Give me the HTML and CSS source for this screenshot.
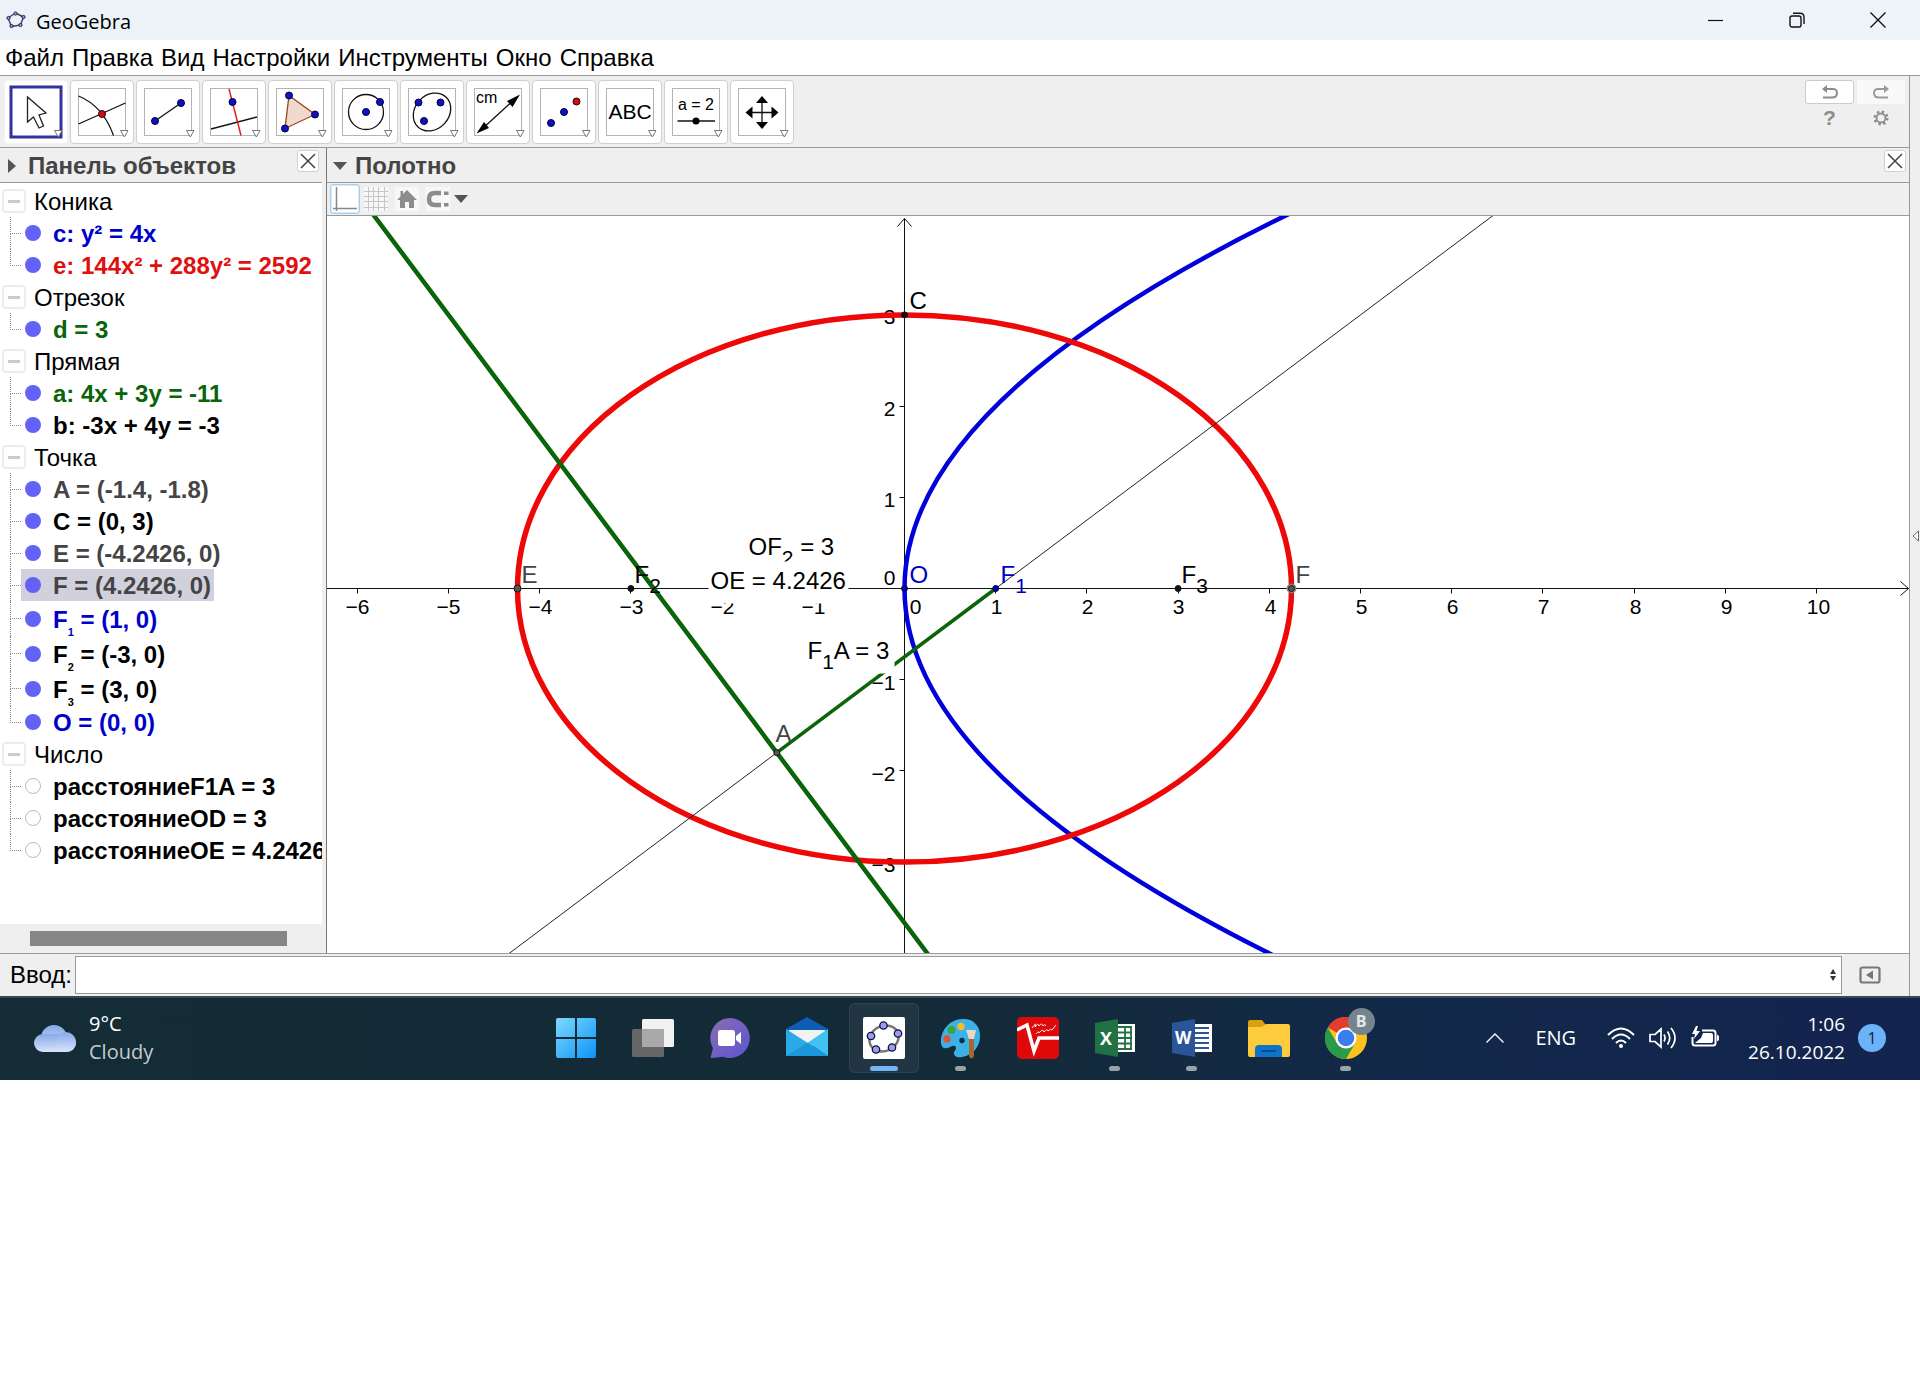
FILE: index.html
```html
<!DOCTYPE html>
<html lang="ru">
<head>
<meta charset="utf-8">
<title>GeoGebra</title>
<meta name="viewport" content="width=device-width, initial-scale=1">
<link rel="stylesheet" href="styles.css">
</head>
<body>
<div class="window">
  <header class="titlebar">
    <svg class="app-logo" viewBox="0 0 20 18" width="20" height="18" aria-hidden="true">
      <path d="M9.500 2 17.500 6 14.500 14 5.500 15.500 2 7Z" fill="none" stroke="#444" stroke-width="1.400" stroke-linejoin="round"/>
      <g fill="#9a9aee" stroke="#225"><circle cx="9.500" cy="2.500" r="1.600"/><circle cx="17.500" cy="6" r="1.600"/><circle cx="14.500" cy="14" r="1.600"/><circle cx="5.500" cy="15" r="1.600"/><circle cx="2.500" cy="7" r="1.600"/></g>
    </svg>
    <span class="app-name">GeoGebra</span>
    <div class="window-controls">
      <button type="button" aria-label="Свернуть"><svg viewBox="0 0 16 16" width="16" height="16"><path d="M0 8.500H15" stroke="#111" stroke-width="1.200"/></svg></button>
      <button type="button" aria-label="Развернуть"><svg viewBox="0 0 16 16" width="16" height="16" fill="none" stroke="#111" stroke-width="1.400"><rect x="1" y="4" width="11" height="11" rx="2"/><path d="M4 1.200H11Q15 1.200 15 5V12"/></svg></button>
      <button type="button" aria-label="Закрыть"><svg viewBox="0 0 16 16" width="16" height="16"><path d="M.5.5 15.500 15.500M15.500.5.5 15.500" stroke="#111" stroke-width="1.400"/></svg></button>
    </div>
  </header>

  <nav class="menubar">
    <button type="button">Файл</button><button type="button">Правка</button><button type="button">Вид</button><button type="button">Настройки</button><button type="button">Инструменты</button><button type="button">Окно</button><button type="button">Справка</button>
  </nav>

  <div class="body-row">
    <div class="content">
      <div class="toolbar">
        <div class="tools">
          <button class="tool selected" type="button" aria-label="Перемещать"><svg viewBox="0 0 62 62"><rect x="6" y="6" width="50" height="50" fill="#fff" stroke="#33339a" stroke-width="3"/><path d="M22.500 16V41L28.500 36 34 47 38.500 45 34 34 41 32Z" fill="#fff" stroke="#222" stroke-width="1.300"/><path class="more" d="M49.500 49.500H57L53.300 56Z"/></svg></button>
          <button class="tool" type="button" aria-label="Точка"><svg viewBox="0 0 62 62"><rect class="frame" x="7.500" y="7.500" width="47" height="47"/><path class="ink" d="M7.500 15Q32 25 42.500 54.500M7.500 43 54.500 22"/><circle cx="31" cy="33" r="3.500" fill="#d01010" stroke="#300"/><path class="more" d="M49.500 49.500H57L53.300 56Z"/></svg></button>
          <button class="tool" type="button" aria-label="Отрезок"><svg viewBox="0 0 62 62"><rect class="frame" x="7.500" y="7.500" width="47" height="47"/><path class="ink" d="M18 40 44 22"/><circle class="pt" cx="18" cy="40" r="3.500"/><circle class="pt" cx="44" cy="22" r="3.500"/><path class="more" d="M49.500 49.500H57L53.300 56Z"/></svg></button>
          <button class="tool" type="button" aria-label="Перпендикулярная прямая"><svg viewBox="0 0 62 62"><rect class="frame" x="7.500" y="7.500" width="47" height="47"/><path class="ink" d="M8 48 54 36"/><path d="M26 8 38 54.500" stroke="#d22" stroke-width="1.500"/><circle class="pt" cx="29.500" cy="21" r="3.500"/><path class="more" d="M49.500 49.500H57L53.300 56Z"/></svg></button>
          <button class="tool" type="button" aria-label="Многоугольник"><svg viewBox="0 0 62 62"><rect class="frame" x="7.500" y="7.500" width="47" height="47"/><path d="M20 14.500 46 33.500 16 47.500Z" fill="#f1d9cd" stroke="#964b1e" stroke-width="1.300"/><circle class="pt" cx="20" cy="14.500" r="3.500"/><circle class="pt" cx="46" cy="33.500" r="3.500"/><circle class="pt" cx="16" cy="47.500" r="3.500"/><path class="more" d="M49.500 49.500H57L53.300 56Z"/></svg></button>
          <button class="tool" type="button" aria-label="Окружность"><svg viewBox="0 0 62 62"><rect class="frame" x="7.500" y="7.500" width="47" height="47"/><circle class="ink" cx="31" cy="31" r="17.500"/><circle class="pt" cx="31" cy="31" r="3.500"/><circle class="pt" cx="45" cy="21" r="3.500"/><path class="more" d="M49.500 49.500H57L53.300 56Z"/></svg></button>
          <button class="tool" type="button" aria-label="Эллипс"><svg viewBox="0 0 62 62"><rect class="frame" x="7.500" y="7.500" width="47" height="47"/><ellipse class="ink" cx="31" cy="31" rx="20.500" ry="17" transform="rotate(-47 31 31)"/><circle class="pt" cx="17.500" cy="21.500" r="3.500"/><circle class="pt" cx="39.500" cy="21.500" r="3.500"/><circle class="pt" cx="23" cy="40" r="3.500"/><path class="more" d="M49.500 49.500H57L53.300 56Z"/></svg></button>
          <button class="tool" type="button" aria-label="Расстояние"><svg viewBox="0 0 62 62"><rect class="frame" x="7.500" y="7.500" width="47" height="47"/><text x="9" y="22" font-size="16">cm</text><path class="ink" d="M14 49 49 17"/><path d="M9.500 52.500 17 41 22 47ZM53 13.500 40 20 45.500 26Z"/><path class="more" d="M49.500 49.500H57L53.300 56Z"/></svg></button>
          <button class="tool" type="button" aria-label="Симметрия"><svg viewBox="0 0 62 62"><rect class="frame" x="7.500" y="7.500" width="47" height="47"/><circle class="pt" cx="18" cy="42" r="3.500"/><circle class="pt" cx="31" cy="31" r="3.500"/><circle cx="43.500" cy="20.500" r="3.500" fill="#d01010" stroke="#300"/><path class="more" d="M49.500 49.500H57L53.300 56Z"/></svg></button>
          <button class="tool" type="button" aria-label="Текст"><svg viewBox="0 0 62 62"><rect class="frame" x="7.500" y="7.500" width="47" height="47"/><text x="31" y="38" font-size="21" text-anchor="middle">ABC</text><path class="more" d="M49.500 49.500H57L53.300 56Z"/></svg></button>
          <button class="tool" type="button" aria-label="Ползунок"><svg viewBox="0 0 62 62"><rect class="frame" x="7.500" y="7.500" width="47" height="47"/><text x="31" y="29" font-size="16" text-anchor="middle">a = 2</text><path class="ink" d="M12.500 40H50"/><circle cx="31" cy="40" r="3.500"/><path class="more" d="M49.500 49.500H57L53.300 56Z"/></svg></button>
          <button class="tool" type="button" aria-label="Переместить чертёж"><svg viewBox="0 0 62 62"><rect class="frame" x="7.500" y="7.500" width="47" height="47"/><path class="ink" d="M31 20V43M20 31.500H43"/><path d="M31 15 37 22H25ZM31 48 37 41H25ZM14.500 31.500 21.500 25.500V37.500ZM47.500 31.500 40.500 25.500V37.500Z"/><path class="more" d="M49.500 49.500H57L53.300 56Z"/></svg></button>
        </div>
        <div class="side-tools">
          <button class="undo" type="button" aria-label="Отменить"><svg viewBox="0 0 18 16" width="18" height="16"><path d="M2 13.500H11Q16 13.500 16 9T11 5H4" fill="none" stroke="#8c8c8c" stroke-width="2"/><path d="M1 5 6 1V9Z" fill="#8c8c8c"/></svg></button>
          <button class="redo" type="button" aria-label="Повторить"><svg viewBox="0 0 18 16" width="18" height="16"><path d="M16 13.500H7Q2 13.500 2 9T7 5H14" fill="none" stroke="#999" stroke-width="2"/><path d="M17 5 12 1V9Z" fill="#999"/></svg></button>
          <button class="plain" type="button" aria-label="Справка">?</button>
          <button class="plain" type="button" aria-label="Настройки"><svg viewBox="0 0 16 16" width="16" height="16" fill="none" stroke="#8c8c8c"><circle cx="8" cy="8" r="4.500" stroke-width="1.800"/><circle cx="8" cy="8" r="6.300" stroke-width="2.400" stroke-dasharray="2.400 2.550"/></svg></button>
        </div>
      </div>

      <div class="views">
        <section class="algebra">
          <header class="view-head">
            <svg viewBox="0 0 8 14" width="8" height="14"><path d="M0 0 8 7 0 14Z" fill="#555"/></svg>
            <h2>Панель объектов</h2>
            <button class="close" type="button" aria-label="Закрыть панель"><svg viewBox="0 0 16 16" width="16" height="16"><path d="M1 1 15 15M15 1 1 15" stroke="#444" stroke-width="1.500"/></svg></button>
          </header>
          <div class="tree">
            <div class="group"><button class="fold" type="button" aria-label="Свернуть"></button>Коника</div>
            <ul>
              <li><span class="branch"></span><span class="item blue"><i class="dot"></i>c: y² = 4x</span></li>
              <li><span class="branch"></span><span class="item red"><i class="dot"></i>e: 144x² + 288y² = 2592</span></li>
            </ul>
            <div class="group"><button class="fold" type="button" aria-label="Свернуть"></button>Отрезок</div>
            <ul>
              <li><span class="branch"></span><span class="item green"><i class="dot"></i>d = 3</span></li>
            </ul>
            <div class="group"><button class="fold" type="button" aria-label="Свернуть"></button>Прямая</div>
            <ul>
              <li><span class="branch"></span><span class="item green"><i class="dot"></i>a: 4x + 3y = -11</span></li>
              <li><span class="branch"></span><span class="item"><i class="dot"></i>b: -3x + 4y = -3</span></li>
            </ul>
            <div class="group"><button class="fold" type="button" aria-label="Свернуть"></button>Точка</div>
            <ul>
              <li><span class="branch"></span><span class="item gray"><i class="dot"></i>A = (-1.4, -1.8)</span></li>
              <li><span class="branch"></span><span class="item"><i class="dot"></i>C = (0, 3)</span></li>
              <li><span class="branch"></span><span class="item gray"><i class="dot"></i>E = (-4.2426, 0)</span></li>
              <li><span class="branch"></span><span class="item gray current"><i class="dot"></i>F = (4.2426, 0)</span></li>
              <li class="tall"><span class="branch"></span><span class="item blue"><i class="dot"></i><span>F<sub>1</sub> = (1, 0)</span></span></li>
              <li class="tall"><span class="branch"></span><span class="item"><i class="dot"></i><span>F<sub>2</sub> = (-3, 0)</span></span></li>
              <li class="tall"><span class="branch"></span><span class="item"><i class="dot"></i><span>F<sub>3</sub> = (3, 0)</span></span></li>
              <li><span class="branch"></span><span class="item blue"><i class="dot"></i>O = (0, 0)</span></li>
            </ul>
            <div class="group"><button class="fold" type="button" aria-label="Свернуть"></button>Число</div>
            <ul>
              <li><span class="branch"></span><span class="item"><i class="dot off"></i>расстояниеF1A = 3</span></li>
              <li><span class="branch"></span><span class="item"><i class="dot off"></i>расстояниеOD = 3</span></li>
              <li><span class="branch"></span><span class="item"><i class="dot off"></i>расстояниеOE = 4.2426</span></li>
            </ul>
          </div>
          <div class="scroll-track"><div class="scroll-thumb"></div></div>
        </section>

        <section class="graphics">
          <header class="view-head">
            <svg viewBox="0 0 14 8" width="14" height="8"><path d="M0 0H14L7 8Z" fill="#555"/></svg>
            <h2>Полотно</h2>
            <button class="close" type="button" aria-label="Закрыть полотно"><svg viewBox="0 0 16 16" width="16" height="16"><path d="M1 1 15 15M15 1 1 15" stroke="#444" stroke-width="1.500"/></svg></button>
          </header>
          <div class="stylebar">
            <button class="on" type="button" aria-label="Оси"><svg viewBox="0 0 24 24" width="24" height="24"><path d="M3.500 0V24M0 21.500H24" stroke="#888" stroke-width="1.500"/></svg></button>
            <button type="button" aria-label="Сетка"><svg viewBox="0 0 24 24" width="24" height="24"><path d="M4.500 0V24M9.500 0V24M14.500 0V24M20.500 0V24M0 4.500H24M0 9.500H24M0 14.500H24M0 20.500H24" stroke="#c6c6c6"/></svg></button>
            <button type="button" aria-label="Вид по умолчанию"><svg viewBox="0 0 24 24" width="24" height="24"><path d="M12 3 22 13H19V21H14V15H10V21H5V13H2L5.500 9.500V4H8V7Z" fill="#8c8c8c"/></svg></button>
            <button type="button" aria-label="Привязка"><svg viewBox="0 0 24 24" width="24" height="24"><path d="M15 6H9Q3 6 3 12T9 18H15" fill="none" stroke="#8c8c8c" stroke-width="4.500"/><path d="M18 4.500H22.500V8H18ZM18 16H22.500V19.500H18Z" fill="#8c8c8c"/></svg></button>
            <button class="drop" type="button" aria-label="Ещё"><svg viewBox="0 0 14 8" width="14" height="8"><path d="M0 0H14L7 8Z" fill="#555"/></svg></button>
          </div>
          <svg class="plot" viewBox="0 0 1582 737" role="img" aria-label="Чертёж">
            <g transform="translate(577.5 372.5)">
              <g class="axis">
                <path d="M-578 0H1004M0 -370V365M996 -7 1004 0 996 7M-7 -362 0 -370 7 -362"/>
                <path d="M-547 0v5M-456 0v5M-365 0v5M-274 0v5M-182 0v5M-91 0v5M91 0v5M182 0v5M274 0v5M365 0v5M456 0v5M547 0v5M638 0v5M730 0v5M821 0v5M912 0v5M0 -274h-5M0 -182h-5M0 -91h-5M0 91h-5M0 182h-5M0 274h-5"/>
              </g>
              <g class="num mid">
                <text x="-547" y="25">−6</text><text x="-456" y="25">−5</text><text x="-364" y="25">−4</text><text x="-273" y="25">−3</text><text x="-182" y="25">−2</text><text x="-91" y="25">−1</text>
                <text x="11" y="25">0</text><text x="92" y="25">1</text><text x="183" y="25">2</text><text x="274" y="25">3</text><text x="366" y="25">4</text><text x="457" y="25">5</text><text x="548" y="25">6</text><text x="639" y="25">7</text><text x="731" y="25">8</text><text x="822" y="25">9</text><text x="914" y="25">10</text>
              </g>
              <g class="num end">
                <text x="-9" y="-265">3</text><text x="-9" y="-173">2</text><text x="-9" y="-82">1</text><text x="-9" y="-4">0</text><text x="-9" y="101">−1</text><text x="-9" y="192">−2</text><text x="-9" y="283">−3</text>
              </g>
              <path d="M441.400 -401.300Q-441.400 0 441.400 401.300" fill="none" stroke="#0000dc" stroke-width="4.500"/>
              <ellipse rx="387" ry="273.600" fill="none" stroke="#ee0808" stroke-width="5.500"/>
              <path d="M-456 410.400 638.400 -410.400" stroke="#222" stroke-width="1"/>
              <path d="M-547.200 -395.200 45.600 395.200" stroke="#0a640a" stroke-width="4.500"/>
              <path d="M-127.700 164.200 91.200 0" stroke="#0a640a" stroke-width="3.500"/>
              <rect x="-100" y="42" width="90" height="43" fill="#fff"/>
              <text class="lbl" x="-97" y="70">F<tspan class="sub" dy="10">1</tspan><tspan dy="-10">A = 3</tspan></text>
              <text class="lbl" x="-156" y="-34">OF<tspan class="sub" dy="10">2</tspan><tspan dy="-10"> = 3</tspan></text>
              <rect x="-196" y="-27" width="140" height="42" fill="#fff"/>
              <text class="lbl" x="-194" y="0">OE = 4.2426</text>
              <g stroke="#111">
                <circle cx="-387" cy="0" r="3.500" fill="#555"/>
                <circle cx="-273.600" cy="0" r="3" fill="#111"/>
                <circle cx="0" cy="0" r="3" fill="#00c"/>
                <circle cx="91.200" cy="0" r="3" fill="#00c"/>
                <circle cx="0" cy="-273.600" r="3" fill="#111"/>
                <circle cx="273.600" cy="0" r="3" fill="#111"/>
                <circle cx="387" cy="0" r="4.500" fill="#999" stroke="#777"/>
                <circle cx="387" cy="0" r="3" fill="#555"/>
                <circle cx="-127.700" cy="164.200" r="3" fill="#555"/>
              </g>
              <text class="lbl" x="5" y="-280">C</text>
              <text class="lbl g" x="-383" y="-6">E</text>
              <text class="lbl" x="-270" y="-6">F<tspan class="sub" dy="10">2</tspan></text>
              <text class="lbl b" x="5" y="-6">O</text>
              <text class="lbl b" x="96" y="-6">F<tspan class="sub" dy="10">1</tspan></text>
              <text class="lbl" x="277" y="-6">F<tspan class="sub" dy="10">3</tspan></text>
              <text class="lbl g" x="391" y="-6">F</text>
              <text class="lbl g" x="-129" y="153">A</text>
            </g>
          </svg>
        </section>
      </div>

      <form class="input-row">
        <label for="cmd">Ввод:</label>
        <div class="combo">
          <input id="cmd" type="text" autocomplete="off">
          <svg viewBox="0 0 8 12" width="8" height="12"><path d="M4 0 7 5H1ZM4 12 7 7H1Z" fill="#333"/></svg>
        </div>
        <button type="button" aria-label="Справка по вводу"><svg viewBox="0 0 22 18" width="22" height="18"><rect x="1.500" y="1.500" width="19" height="15" rx="2" fill="none" stroke="#777" stroke-width="2.200"/><path d="M14 4.500V13.500L7 9Z" fill="#777"/></svg></button>
      </form>
    </div>
    <aside class="edge"><svg viewBox="0 0 8 12" width="8" height="12"><path d="M6.500 1V11L1 6Z" fill="#fff" stroke="#666"/></svg></aside>
  </div>

  <footer class="taskbar">
    <div class="weather">
      <svg viewBox="0 0 42 27" width="42" height="27">
        <defs><linearGradient id="cl" x1="0" y1="0" x2="0" y2="1"><stop offset="0" stop-color="#86a8ea"/><stop offset="1" stop-color="#d8e4fa"/></linearGradient></defs>
        <circle cx="20" cy="13" r="13" fill="url(#cl)"/><rect y="9" width="42" height="18" rx="9" fill="url(#cl)"/><circle cx="32" cy="17" r="10" fill="url(#cl)"/>
      </svg>
      <div class="lines"><span>9°C</span><span class="dim">Cloudy</span></div>
    </div>
    <div class="apps">
      <button type="button" aria-label="Пуск"><svg viewBox="0 0 42 42"><defs><linearGradient id="w" gradientUnits="userSpaceOnUse" x1="0" y1="0" x2="42" y2="42"><stop offset="0" stop-color="#7fdcfd"/><stop offset="1" stop-color="#0b90f8"/></linearGradient></defs><path d="M3 1H20V20H1V3Q1 1 3 1ZM22 1H39Q41 1 41 3V20H22ZM1 22H20V41H3Q1 41 1 39ZM22 22H41V39Q41 41 39 41H22Z" fill="url(#w)"/></svg></button>
      <button type="button" aria-label="Представление задач"><svg viewBox="0 0 42 42"><rect y="12" width="32" height="28" rx="1.500" fill="#666"/><rect x="10" y="2" width="32" height="28" rx="1.500" fill="#f1f1f1"/><path d="M10 12H32V30H10Z" fill="#a9a9a9"/></svg></button>
      <button type="button" aria-label="Чат"><svg viewBox="0 0 42 42"><defs><linearGradient id="ch" x1="0" y1="0" x2="1" y2="1"><stop offset="0" stop-color="#8b6cb4"/><stop offset="1" stop-color="#5a55d0"/></linearGradient></defs><path d="M21 1A20 20 0 1 1 14 39.800L3 41Q1 41 2 39L4 31A20 20 0 0 1 21 1Z" fill="url(#ch)"/><rect x="9" y="13" width="17" height="16" rx="2.500" fill="#fff"/><path d="M27 19 32 15V27L27 23Z" fill="#fff"/></svg></button>
      <button type="button" aria-label="Почта"><svg viewBox="0 0 42 42"><path d="M0 12 21 0 42 12V22H0Z" fill="#0d5db4"/><path d="M3 13H39V24L21 32 3 24Z" fill="#f2f2f2"/><path d="M0 12 42 39H0Z" fill="#29a9e6"/><path d="M42 12V39L22 25.500Z" fill="#3fc3f3"/><path d="M0 39H42L22 25.500Z" fill="#1c97da"/></svg></button>
      <button class="active" type="button" aria-label="GeoGebra"><svg viewBox="0 0 42 42"><rect width="42" height="42" rx="2" fill="#fff"/><ellipse cx="21" cy="21.500" rx="15" ry="12.500" transform="rotate(-25 21 21.500)" fill="none" stroke="#777" stroke-width="2.500"/><g fill="#9c9cf4" stroke="#113" stroke-width="1.300"><circle cx="20.500" cy="8.500" r="3.700"/><circle cx="35" cy="16.500" r="3.700"/><circle cx="29" cy="30.500" r="3.700"/><circle cx="13" cy="32.500" r="3.700"/><circle cx="8" cy="19" r="3.700"/></g></svg></button>
      <button class="open" type="button" aria-label="Paint"><svg viewBox="0 0 42 42"><path d="M24 2C10 1 0 14 1 26C2 34 9 31 12 29C17 28 17 32 14 35C13 39 17 41 22 40C34 38 41 28 40 17C39 8 33 2 24 2Z" fill="#3bb1e7"/><circle cx="11.500" cy="13" r="4" fill="#3ba53b"/><circle cx="21" cy="9.500" r="3.700" fill="#f4bc2b"/><circle cx="7" cy="22" r="3.700" fill="#dd5632"/><circle cx="22" cy="23.500" r="2.700" fill="#132c3d"/><path d="M29 20H34V39Q31.500 44 29 39Z" fill="#a5682c"/><path d="M26 13H36L34 22H29Z" fill="#ead9c2"/></svg></button>
      <button type="button" aria-label="Video"><svg viewBox="0 0 42 42"><rect width="42" height="42" rx="5" fill="#df0909"/><path d="M0 13 10 8 17 34 22 21H42" fill="none" stroke="#fff" stroke-width="3.500"/><path d="M15 11Q20 4 18 10Q21 5 22 9Q25 5 26 9Q28 6 29 9M19 17Q22 13 22 16Q26 11 27 15Q30 11 31 14Q34 11 35 13L39 8" fill="none" stroke="#fff" stroke-width=".9"/></svg></button>
      <button class="open" type="button" aria-label="Excel"><svg viewBox="0 0 42 42"><path d="M20 7H41V35H20Z" fill="#fff"/><path d="M23 10V32M31 10V32M37 10V32M22 10H38M22 15.500H38M22 21H38M22 26.500H38M22 32H38" stroke="#207245" stroke-width="1.800"/><path d="M1 6 24 2V40L1 36Z" fill="#207245"/><text x="6" y="28" font-size="18" font-weight="700" fill="#fff">X</text></svg></button>
      <button class="open" type="button" aria-label="Word"><svg viewBox="0 0 42 42"><path d="M20 7H41V35H20Z" fill="#fff"/><path d="M23 11H38M23 16H38M23 21H38M23 26H38M23 31H38" stroke="#2a5699" stroke-width="2"/><path d="M1 6 24 2V40L1 36Z" fill="#2a5699"/><text x="4" y="27" font-size="17" font-weight="700" fill="#fff">W</text></svg></button>
      <button type="button" aria-label="Проводник"><svg viewBox="0 0 42 42"><path d="M0 5Q0 3 2 3H14L17 7V14H0Z" fill="#d9a010"/><path d="M0 10H14L18 7H40Q42 7 42 9V38Q42 40 40 40H2Q0 40 0 38Z" fill="#fdcb3e"/><path d="M7 40V32Q7 28 11 28H30Q34 28 34 32V40Z" fill="#0f74c8"/><path d="M13 34H28" stroke="#0a4d8e" stroke-width="2"/></svg></button>
      <button class="open" type="button" aria-label="Chrome"><svg viewBox="0 0 42 42"><circle cx="21" cy="21" r="21" fill="#fcc31e"/><path d="M21 21 2.800 10.500A21 21 0 0 1 39.200 10.500H21Z" fill="#e33b2e"/><path d="M2.800 10.500A21 21 0 0 0 21 42L30.100 26.200 21 21 11.900 26.200Z" fill="#2a9b4b"/><circle cx="21" cy="21" r="10.500" fill="#fff"/><circle cx="21" cy="21" r="8.300" fill="#3b7ded"/></svg><span class="profile">B</span></button>
    </div>
    <div class="tray">
      <svg viewBox="0 0 18 10" width="18" height="10"><path d="M.5 9.500 9 1 17.500 9.500" fill="none" stroke="#fff" stroke-width="1.300"/></svg>
      <span class="lang">ENG</span>
      <div class="status">
        <svg viewBox="0 0 28 22" width="28" height="22" fill="none" stroke="#fff" stroke-width="2"><path d="M1 8Q14 -5 27 8M5 12Q14 3 23 12M9 16Q14 11 19 16"/><circle cx="14" cy="19" r="2" fill="#fff" stroke="none"/></svg>
        <svg viewBox="0 0 28 24" width="28" height="24" fill="none" stroke="#fff" stroke-width="1.700"><path d="M1 8.500H6L12 3V21L6 15.500H1ZM15 8.500Q17 12 15 15.500M18.500 5.500Q23 12 18.500 18.500M22 2Q30 12 22 22"/></svg>
        <svg viewBox="0 0 28 24" width="28" height="24"><path d="M11 4.500H22Q24.500 4.500 24.500 7V17Q24.500 19.500 22 19.500H4Q1.500 19.500 1.500 17V11" fill="none" stroke="#fff" stroke-width="2"/><path d="M26 8.500 28 10V14L26 15.500ZM12 7H20Q22 7 22 9V15Q22 17 20 17H4L10 12ZM5 0 1 8H4L3 13 9 5H5.500L7 0Z" fill="#fff"/></svg>
      </div>
      <div class="lines clock"><span>1:06</span><span>26.10.2022</span></div>
      <span class="badge">1</span>
    </div>
  </footer>
</div>
</body>
</html>
```
FILE: styles.css
```css
* { box-sizing: border-box; }

body {
  margin: 0;
  background: #fff;
  color: #000;
  font-family: "Liberation Sans", Arial, sans-serif;
  font-size: 24px;
}

button {
  margin: 0;
  padding: 0;
  border: 0;
  background: none;
  color: inherit;
  font: inherit;
}

svg { display: block; flex: none; }
h2 { margin: 0; font-size: 24px; line-height: 32px; color: #444; }

/* Title bar and menu */
.titlebar {
  display: flex;
  align-items: center;
  height: 40px;
  padding-left: 6px;
  background: linear-gradient(90deg, #ebf3f8, #eff3fa);
}
.app-name {
  margin-left: 10px;
  padding-top: 3px;
  font: 20px/28px "Open Sans", "Noto Sans", sans-serif;
}
.window-controls {
  display: flex;
  gap: 65px;
  margin-left: auto;
  padding-right: 34px;
}
.menubar {
  display: flex;
  gap: 8px;
  height: 35px;
  padding: 1px 0 0 5px;
}

/* Application body */
.body-row { display: flex; background: #efefef; }
.content { flex: 1; min-width: 0; border-top: 1px solid #999; }
.edge {
  display: flex;
  align-items: center;
  justify-content: flex-end;
  width: 11px;
  border: solid #999;
  border-width: 1px 0 0 1px;
}

.toolbar {
  display: flex;
  justify-content: space-between;
  padding: 4px 4px 3px;
  border-bottom: 1px solid #999;
}
.tools { display: flex; gap: 2px; }
.tool {
  width: 64px;
  height: 64px;
  border: 1px solid #d0d0d0;
  border-radius: 4px;
  background: #fff;
}
.tool svg { width: 62px; height: 62px; }
.tool.selected { border-color: #f4f4f4; }
.frame { fill: #fff; stroke: #b4b4b4; }
.ink { fill: none; stroke: #111; stroke-width: 1.3px; }
.pt { fill: #1010c8; stroke: #003; }
.more { fill: #fff; stroke: #777; }
.side-tools {
  display: grid;
  grid-template-columns: 49px 48px;
  grid-template-rows: 24px 27px;
  column-gap: 3px;
}
.side-tools button { display: flex; align-items: center; justify-content: center; }
.undo { border: 1px solid #ccc; border-radius: 3px; background: #fff; }
.redo { background: #f9f9f9; }
.side-tools .plain { color: #8c8c8c; font-size: 21px; font-weight: 700; }

.views { display: flex; }
.algebra {
  display: flex;
  flex-direction: column;
  width: 322px;
}
.graphics {
  flex: 1;
  min-width: 0;
  margin-left: 4px;
  border-left: 1px solid #777;
}
.view-head {
  display: flex;
  align-items: center;
  gap: 12px;
  height: 35px;
  padding: 2px 3px 0 8px;
  border-bottom: 1px solid #999;
}
.graphics .view-head { gap: 8px; padding-left: 6px; }
.close {
  display: grid;
  place-items: center;
  align-self: flex-start;
  width: 22px;
  height: 22px;
  margin-left: auto;
  border: 1px solid #d0d0d0;
  border-radius: 3px;
  background: #fff;
}

/* Object tree */
.tree {
  flex: 1;
  overflow: hidden;
  padding-top: 2px;
  background: #fff;
  white-space: nowrap;
}
.tree ul { margin: 0; padding: 0; list-style: none; }
.group { display: flex; align-items: center; gap: 8px; height: 32px; padding: 2px 0 0 2px; }
.fold {
  display: grid;
  place-items: center;
  width: 24px;
  height: 24px;
  margin-top: -2px;
  border: 2px solid #ececec;
  border-radius: 4px;
}
.fold::before { content: ""; width: 12px; height: 3px; background: #ccc; }
.tree li { display: flex; height: 32px; padding-left: 10px; font-weight: 700; }
.tree li.tall { height: 35px; }
.branch { display: flex; flex: none; flex-direction: column; width: 11px; }
.branch::before, .branch::after { content: ""; flex: 1; border-left: 1px dotted #888; }
.branch::before { border-bottom: 1px dotted #888; }
li:last-child .branch::after { border-color: transparent; }
.item { display: flex; flex: none; align-items: center; padding: 2px 3px 0 4px; }
.current { background: #d1d1de; }
.dot { flex: none; width: 16px; height: 16px; margin: -2px 12px 0 0; border-radius: 50%; background: #6262f6; }
.dot.off { border: 1px solid #bbb; background: #fff; }
.item sub { font-size: 11px; line-height: 0; vertical-align: -8px; }
.blue { color: #0000cd; }
.red { color: #e01010; }
.green { color: #0a640a; }
.gray { color: #444; }
.scroll-track { height: 29px; padding: 7px 35px 7px 30px; }
.scroll-thumb { height: 15px; background: #868686; }

/* Drawing area */
.stylebar {
  display: flex;
  align-items: center;
  gap: 7px;
  height: 33px;
  padding-left: 3px;
  border-bottom: 1px solid #999;
}
.stylebar button { background: #f7f7f7; }
.stylebar .on { margin-right: -3px; padding: 2px; border: 1px solid #a9cdea; border-radius: 3px; background: #fff; box-shadow: inset 0 0 0 1px #d5e9f8; }
.stylebar .drop { margin-left: -3px; background: none; }
.plot { width: 100%; height: auto; background: #fff; }
.axis { fill: none; stroke: #111; }
.num { font-size: 21px; }
.mid { text-anchor: middle; }
.end { text-anchor: end; }
.lbl { font-size: 24px; }
.sub { font-size: 21px; }
.lbl.g { fill: #444; }
.lbl.b { fill: #0000c0; }

/* Command line */
.input-row {
  display: flex;
  align-items: center;
  height: 43px;
  padding-left: 10px;
  border-top: 1px solid #999;
}
.combo {
  display: flex;
  flex: 1;
  align-items: center;
  height: 38px;
  margin: 0 17px 0 3px;
  padding-right: 4px;
  border: 1px solid #999;
  background: #fff;
}
.combo input { flex: 1; min-width: 0; height: 36px; border: 0; background: none; font: inherit; outline: 0; }
.input-row > button { margin-right: 28px; }

/* Taskbar */
.taskbar {
  display: grid;
  grid-template-columns: 1fr auto 1fr;
  align-items: center;
  height: 84px;
  box-shadow: inset 0 2px #3a4a54;
  background: linear-gradient(90deg, #132c35 0%, #132b38 50%, #12284a 75%, #13244f 100%);
  color: #fff;
  font: 20px/28px "Open Sans", "Noto Sans", sans-serif;
}
.weather { display: flex; align-items: center; gap: 13px; padding-left: 34px; }
.lines { display: flex; flex-direction: column; }
.dim { color: #c5ccd0; }
.apps { display: flex; gap: 7px; padding-left: 1px; }
.apps button {
  position: relative;
  display: flex;
  flex-direction: column;
  align-items: center;
  width: 70px;
  height: 70px;
  padding-top: 14px;
  border-radius: 6px;
}
.apps svg { width: 42px; height: 42px; font-family: "Open Sans", sans-serif; }
.apps .active { background: #213642; box-shadow: inset 0 0 0 1px #2d424d; }
.apps .active::after, .apps .open::after {
  content: "";
  width: 11px;
  height: 5px;
  margin-top: 7px;
  border-radius: 3px;
  background: #98a2aa;
}
.apps .active::after { width: 28px; background: #76b5f5; }
.profile {
  position: absolute;
  top: 5px;
  right: 6px;
  width: 27px;
  height: 27px;
  border-radius: 50%;
  background: #75848f;
  color: #e4e8ea;
  font-size: 16px;
  font-weight: 700;
  line-height: 27px;
}
.tray { display: flex; align-items: center; justify-content: flex-end; padding-right: 34px; }
.lang { margin: 0 31px; }
.status { display: flex; align-items: center; gap: 14px; }
.clock { margin: 0 13px 0 29px; font-size: 19px; text-align: right; }
.badge {
  width: 28px;
  height: 28px;
  border-radius: 50%;
  background: #6cb2fb;
  color: #123;
  font-size: 16px;
  text-align: center;
}
```
